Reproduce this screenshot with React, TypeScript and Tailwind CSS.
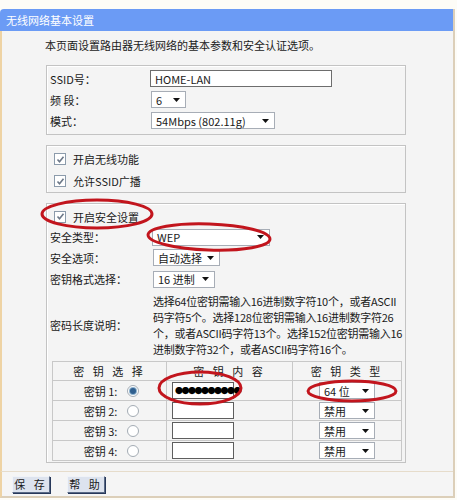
import React from 'react';

const Arrow = () => (
  <svg width="7" height="4" viewBox="0 0 7 4" className="shrink-0"><path d="M0 0h7L3.5 4z" fill="#111" /></svg>
);

const Sel = ({ v, cls }: { v: string; cls: string }) => (
  <div className={`flex items-center justify-between h-[17px] bg-white border border-[#a7adb6] pl-[4px] pr-[5px] ${cls}`}>
    <span className="whitespace-pre">{v}</span><Arrow />
  </div>
);

const Check = () => (
  <span className="w-[12px] h-[12px] border border-[#8c9bab] bg-white flex items-center justify-center shrink-0">
    <svg width="9" height="9" viewBox="0 0 9 9"><path d="M1.5 4.5l2 2.2L7.5 1.8" stroke="#6c7888" strokeWidth="1.6" fill="none" /></svg>
  </span>
);

const Radio = ({ on }: { on?: boolean }) => (
  <span className="w-[12px] h-[12px] rounded-full border border-[#a4acb4] bg-white flex items-center justify-center shrink-0">
    {on && <span className="w-[6px] h-[6px] rounded-full bg-[#2f5f8f] ring-1 ring-[#8fb3cf]" />}
  </span>
);

const Box = ({ cls, children }: { cls: string; children: React.ReactNode }) => (
  <div className={`ml-[44px] w-[360px] border border-[#c3c3c3] shadow-[inset_1px_1px_0_#fff] ${cls}`}>{children}</div>
);

const keys = [
  { n: '1', on: true, t: '64 位' },
  { n: '2', on: false, t: '禁用' },
  { n: '3', on: false, t: '禁用' },
  { n: '4', on: false, t: '禁用' },
];

export default function App() {
  return (
    <div className="relative w-[457px] h-[500px] bg-[#fdfcf7] pt-[9px] text-[11px] leading-[16px] text-[#1a1a1a] font-['Noto_Sans_CJK_SC',sans-serif] overflow-hidden">
      <div className="w-[455px] border-r-2 border-[#dccfb9] flex flex-col">
        <div className="h-[22px] bg-[#6b9bf5] rounded-tl-[4px] text-white pl-[6px] flex items-center">无线网络基本设置</div>
        <div className="border-l-2 border-[#eed3a4] bg-[#f4f4f4] pt-[6px] h-[440px]">
          <div className="pl-[43px]">本页面设置路由器无线网络的基本参数和安全认证选项。</div>

          <Box cls="mt-[12px] pt-[2px] pb-[3px] pl-[3px]">
            <div className="h-[21px] flex items-center">
              <span className="w-[100px]">SSID号：</span>
              <div className="w-[182px] h-[17px] bg-white border border-[#6d6d6d] pl-[4px] flex items-center">HOME-LAN</div>
            </div>
            <div className="h-[21px] flex items-center">
              <span className="w-[101px] whitespace-pre">频 段：</span>
              <Sel v="6" cls="w-[35px]" />
            </div>
            <div className="h-[21px] flex items-center">
              <span className="w-[101px]">模式：</span>
              <Sel v="54Mbps (802.11g)" cls="w-[124px]" />
            </div>
          </Box>

          <Box cls="mt-[10px] pt-[2px] pl-[7px]">
            <div className="h-[22px] flex items-center gap-[7px]"><Check />开启无线功能</div>
            <div className="h-[22px] flex items-center gap-[7px]"><Check />允许SSID广播</div>
          </Box>

          <Box cls="mt-[10px] pt-[2px] pb-[1px] pl-[3px]">
            <div className="h-[21px] flex items-center gap-[7px] pl-[4px]"><Check />开启安全设置</div>
            <div className="h-[20px] flex items-center">
              <span className="w-[102px]">安全类型：</span>
              <Sel v="WEP" cls="w-[118px]" />
            </div>
            <div className="h-[21px] flex items-center">
              <span className="w-[103px]">安全选项：</span>
              <Sel v="自动选择" cls="w-[67px]" />
            </div>
            <div className="h-[22px] flex items-center">
              <span className="w-[103px]">密钥格式选择：</span>
              <Sel v="16 进制" cls="w-[62px]" />
            </div>
            <div className="mt-[3px] flex items-center">
              <span className="w-[103px]">密码长度说明：</span>
              <div className="whitespace-nowrap tracking-[-0.25px]">
                <div>选择64位密钥需输入16进制数字符10个，或者ASCII</div>
                <div>码字符5个。选择128位密钥需输入16进制数字符26</div>
                <div>个，或者ASCII码字符13个。选择152位密钥需输入16</div>
                <div>进制数字符32个，或者ASCII码字符16个。</div>
              </div>
            </div>
            <table className="mt-[4px] ml-[2px] w-[350px] border-collapse border border-[#bdbdbd]">
              <thead>
                <tr className="h-[19px]">
                  <th className="w-[114px] border border-[#c8c8c8] font-normal tracking-[3px]">密 钥 选 择</th>
                  <th className="w-[126px] border border-[#c8c8c8] font-normal tracking-[3px]">密 钥 内 容</th>
                  <th className="border border-[#c8c8c8] font-normal tracking-[3px]">密 钥 类 型</th>
                </tr>
              </thead>
              <tbody>
                {keys.map(k => (
                  <tr key={k.n} className="h-[20px]">
                    <td className="border border-[#c8c8c8]">
                      <div className="flex items-center justify-center gap-[10px] pl-[4px]"><span className="whitespace-pre">密钥 {k.n}:</span><Radio on={k.on} /></div>
                    </td>
                    <td className="border border-[#c8c8c8] pl-[5px]">
                      <div className="w-[62px] h-[17px] bg-white border border-[#5e5e5e] flex items-center pl-[2px]">
                        {k.on && <span className="text-[8px] leading-[10px] font-bold tracking-[-1.5px] text-black">●●●●●●●●●●</span>}
                      </div>
                    </td>
                    <td className="border border-[#c8c8c8]">
                      <div className="flex justify-center"><Sel v={k.t} cls="w-[56px]" /></div>
                    </td>
                  </tr>
                ))}
              </tbody>
            </table>
          </Box>
        </div>
        <div className="border-l-2 border-t border-b-2 border-l-[#eed3a4] border-t-[#e6dccb] border-b-[#dccfb9] bg-[#f5f5f5] h-[27px] pt-[4px] pl-[10px] flex items-start gap-[17px]">
          <button className="w-[38px] h-[17px] bg-[#dde3ee] border border-[#5a6a86] border-t-[#f0f3f8] border-l-[#f0f3f8] shadow-[1px_1px_0_#27385a] tracking-[3px] leading-[15px] text-[11px]">保 存</button>
          <button className="w-[38px] h-[17px] bg-[#dde3ee] border border-[#5a6a86] border-t-[#f0f3f8] border-l-[#f0f3f8] shadow-[1px_1px_0_#27385a] tracking-[3px] leading-[15px] text-[11px]">帮 助</button>
        </div>
      </div>

      <svg className="absolute left-0 top-0 pointer-events-none" width="457" height="500">
        <g fill="none" stroke="#c2151d" strokeWidth="3">
          <ellipse cx="97" cy="214" rx="55" ry="14" />
          <ellipse cx="209" cy="237" rx="61" ry="13" transform="rotate(2 209 237)" />
          <ellipse cx="200" cy="388" rx="41" ry="16" />
          <ellipse cx="352" cy="391" rx="44" ry="10" />
        </g>
      </svg>
    </div>
  );
}
